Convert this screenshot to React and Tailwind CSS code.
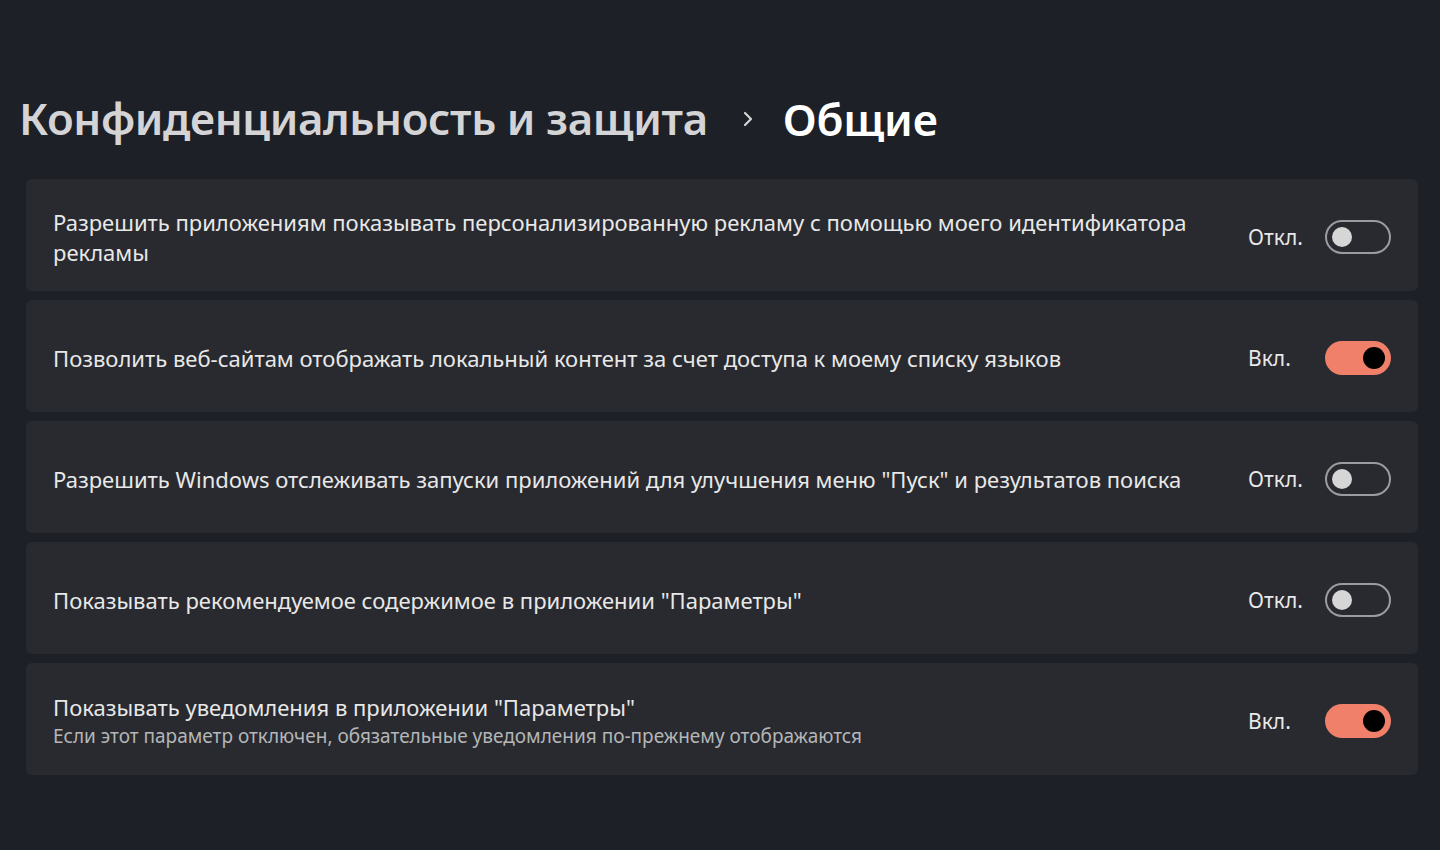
import React from 'react'

const rows = [
  { title: 'Разрешить приложениям показывать персонализированную рекламу с помощью моего идентификатора рекламы', on: false },
  { title: 'Позволить веб-сайтам отображать локальный контент за счет доступа к моему списку языков', on: true },
  { title: 'Разрешить Windows отслеживать запуски приложений для улучшения меню "Пуск" и результатов поиска', on: false },
  { title: 'Показывать рекомендуемое содержимое в приложении "Параметры"', on: false },
  { title: 'Показывать уведомления в приложении "Параметры"', sub: 'Если этот параметр отключен, обязательные уведомления по-прежнему отображаются', on: true },
]

function Toggle({ on }) {
  if (on) {
    return (
      <div className="w-[66px] h-[34px] rounded-full bg-[#f0806a] flex items-center justify-end pr-[6px]">
        <div className="w-[22px] h-[22px] rounded-full bg-black" />
      </div>
    )
  }
  return (
    <div className="w-[66px] h-[34px] rounded-full border-2 border-[#9a9c9f] flex items-center pl-[5px]">
      <div className="w-[20px] h-[20px] rounded-full bg-[#d6d6d6]" />
    </div>
  )
}

export default function App() {
  return (
    <div className="w-[1440px] h-[850px] bg-[#1d2026] text-[#e6e6e6] overflow-hidden" style={{ fontFamily: '"Noto Sans", "Open Sans", sans-serif' }}>
      <div className="flex items-center pt-[88px] pl-[19px] h-[179px] pb-[30px]">
        <span className="text-[43.8px] font-semibold text-[#d4d4d6] tracking-[-0.4px]">Конфиденциальность и защита</span>
        <svg className="ml-[33px] mr-[28px]" width="14" height="22" viewBox="0 0 14 22">
          <path d="M4 5 L10 11 L4 17" fill="none" stroke="#d4d4d6" strokeWidth="2.2" strokeLinecap="round" strokeLinejoin="round" />
        </svg>
        <span className="text-[44px] font-semibold text-white tracking-[-0.2px]">Общие</span>
      </div>
      <div className="flex flex-col gap-[9px] pl-[26px] pr-[22px]">
        {rows.map((r, i) => (
          <div key={i} className="h-[112px] bg-[#282a2f] rounded-[6px] flex items-center pl-[27px] pr-[27px] pt-[3px]">
            <div className="flex-1 pr-[50px]">
              <div className="text-[22px] leading-[30px] text-[#e8e8e8]">{r.title}</div>
              {r.sub && <div className="text-[19px] leading-[28px] text-[#b4b6b8]">{r.sub}</div>}
            </div>
            <div className="flex items-center">
              <span className="w-[77px] text-[21px] text-[#e8e8e8] pt-[3px]">{r.on ? 'Вкл.' : 'Откл.'}</span>
              <Toggle on={r.on} />
            </div>
          </div>
        ))}
      </div>
    </div>
  )
}
